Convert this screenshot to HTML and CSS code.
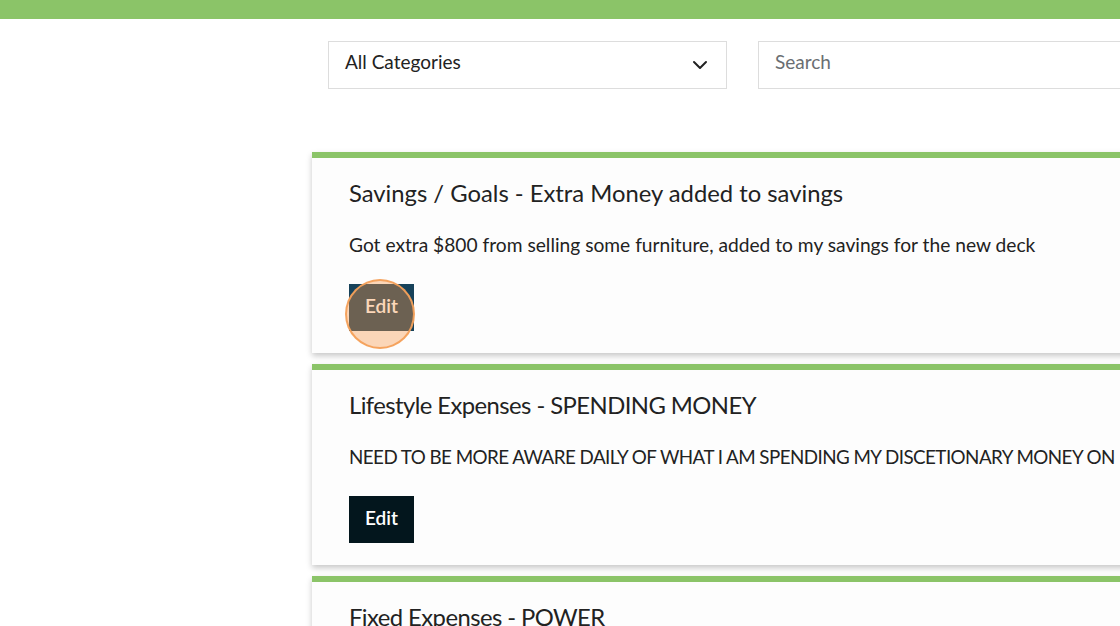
FILE: index.html
```html
<!DOCTYPE html>
<html>
<head>
<meta charset="utf-8">
<link rel="stylesheet" href="styles.css">
</head>
<body>
<div class="topbar"></div>
<main class="main">
  <div class="filters">
    <div class="select">
      <span class="label">All Categories</span>
      <svg class="chev" width="16" height="10" viewBox="0 0 16 10"><path d="M2 2l6 6 6-6" fill="none" stroke="#222" stroke-width="2" stroke-linecap="round" stroke-linejoin="round"/></svg>
    </div>
    <div class="search"><span class="label">Search</span></div>
  </div>
  <div class="cards">
    <div class="card">
      <h2 class="title">Savings / Goals - Extra Money added to savings</h2>
      <p class="desc">Got extra $800 from selling some furniture, added to my savings for the new deck</p>
      <div class="btnwrap">
        <button class="edit hover">Edit</button>
        <span class="ring"></span>
      </div>
    </div>
    <div class="card">
      <h2 class="title caps">Lifestyle Expenses - SPENDING MONEY</h2>
      <p class="desc caps">NEED TO BE MORE AWARE DAILY OF WHAT I AM SPENDING MY DISCETIONARY MONEY ON</p>
      <div class="btnwrap">
        <button class="edit">Edit</button>
      </div>
    </div>
    <div class="card">
      <h2 class="title caps">Fixed Expenses - POWER</h2>
      <p class="desc">&nbsp;</p>
    </div>
  </div>
</main>
</body>
</html>
```
FILE: styles.css
```css
* { box-sizing: border-box; }
html, body { margin: 0; padding: 0; }
body {
  font-family: Lato, "Open Sans", sans-serif;
  background: #fff;
  color: #222;
  width: 1120px;
  height: 626px;
  overflow: hidden;
}
.topbar {
  height: 19px;
  background: #8bc468;
}
.main {
  padding-left: 312px;
  overflow: hidden;
}
.filters {
  display: flex;
  gap: 31px;
  padding: 22px 0 0 16px;
  height: 133px;
}
.select, .search {
  height: 48px;
  border: 1px solid #dddddd;
  display: flex;
  align-items: center;
  font-size: 19px;
  flex-shrink: 0;
}
.label {
  position: relative;
  top: -4px;
}
.select {
  width: 399px;
  padding: 0 18px 0 16px;
  justify-content: space-between;
  color: #222;
}
.search {
  width: 500px;
  padding: 0 16px;
  color: #6a6e72;
}
.cards {
  display: flex;
  flex-direction: column;
  gap: 11px;
  width: 1000px;
}
.card {
  background: #fdfdfd;
  border-top: 6px solid #8bc468;
  box-shadow: 0 3px 6px rgba(0,0,0,0.22);
  padding: 20px 37px 22px;
}
.title {
  margin: 0;
  font-size: 23.8px;
  font-weight: 400;
  line-height: 30px;
  color: #222;
  white-space: nowrap;
}
.title.caps {
  letter-spacing: -0.55px;
}
.desc {
  margin: 25px 0 0;
  font-size: 19.2px;
  line-height: 24px;
  color: #222;
  white-space: nowrap;
}
.desc.caps {
  letter-spacing: -0.55px;
  font-size: 18.8px;
}
.btnwrap {
  position: relative;
  margin-top: 27px;
  width: 65px;
  height: 47px;
}
.edit {
  width: 65px;
  height: 47px;
  border: 0;
  padding: 0 0 4px;
  background: #03161d;
  color: #fff;
  font-family: Lato, sans-serif;
  font-size: 19px;
  font-weight: 600;
}
.edit.hover {
  background: #17425a;
}
.ring {
  position: absolute;
  left: -4px;
  top: -5px;
  width: 70px;
  height: 70px;
  border-radius: 50%;
  background: rgba(246, 150, 72, 0.38);
  border: 2px solid rgba(244, 160, 90, 0.95);
}
```
